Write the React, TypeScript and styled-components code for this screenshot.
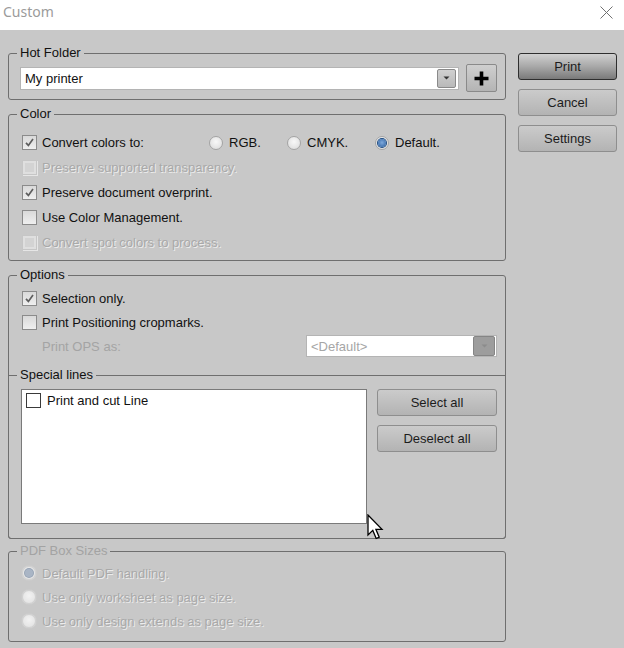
import React from "react";
import styled, { createGlobalStyle, css } from "styled-components";

const GlobalStyle = createGlobalStyle`
  html, body {
    margin: 0;
    padding: 0;
    background: #c8c8c8;
  }
  body {
    font-family: "Liberation Sans", Arial, sans-serif;
    font-size: 13px;
    color: #111;
  }
  * {
    box-sizing: border-box;
  }
`;

const Window = styled.div`
  position: relative;
  width: 624px;
  height: 648px;
  overflow: hidden;
  background: #c8c8c8;
`;

const TitleBar = styled.div`
  height: 30px;
  background: #fff;
  display: flex;
  justify-content: space-between;
  align-items: flex-start;
  padding: 2px 11px 0 3px;
`;

const Title = styled.div`
  font-family: "Noto Sans", sans-serif;
  font-size: 14px;
  line-height: 20px;
  color: #9b9b9b;
`;

const CloseBox = styled.div`
  padding-top: 4px;
  display: flex;
`;

const Body = styled.div`
  display: flex;
  gap: 12px;
  padding: 16px 0 0 8px;
`;

const LeftColumn = styled.div`
  width: 498px;
  display: flex;
  flex-direction: column;
`;

const RightColumn = styled.div`
  width: 99px;
  display: flex;
  flex-direction: column;
  gap: 9px;
  padding-top: 7px;
`;

const Group = styled.fieldset<{ $top?: number }>`
  margin: ${(p) => p.$top ?? 0}px 0 0;
  padding: 0;
  min-width: 0;
  border: 1px solid #6f6f6f;
  border-radius: 3px;
`;

// shares left/right/bottom edges with the Options box
const InnerGroup = styled.fieldset`
  margin: 10px -1px -1px;
  padding: 0;
  min-width: 0;
  border: 1px solid #6f6f6f;
  border-radius: 0 0 3px 3px;
`;

const Legend = styled.legend<{ $disabled?: boolean }>`
  margin-left: 8px;
  padding: 0 3px;
  line-height: 14px;
  font-size: 13px;
  color: ${(p) => (p.$disabled ? "#a3a3a3" : "#111")};
`;

const GroupBody = styled.div<{ $pad: string }>`
  padding: ${(p) => p.$pad};
`;

const Row = styled.div<{ $h?: number }>`
  display: flex;
  align-items: center;
  height: ${(p) => p.$h ?? 25}px;
`;

const HotRow = styled.div`
  display: flex;
  align-items: center;
  gap: 7px;
  height: 28px;
`;

const Combo = styled.div<{ $disabled?: boolean }>`
  flex: 1;
  height: 23px;
  background: #fff;
  border: 1px solid #b4b4b4;
  display: flex;
  align-items: center;
  padding: 0 2px 0 4px;
  color: ${(p) => (p.$disabled ? "#a6a6a6" : "#111")};
`;

const ComboText = styled.span`
  flex: 1;
`;

const DropButton = styled.span<{ $disabled?: boolean }>`
  width: 19px;
  height: 19px;
  border: 1px solid #8a8a8a;
  border-radius: 2px;
  background: linear-gradient(#d0d0d0, #b9b9b9);
  display: flex;
  align-items: center;
  justify-content: center;
  color: #333;
  ${(p) =>
    p.$disabled &&
    css`
      width: 22px;
      height: 20px;
      border-color: #858585;
      background: #9d9d9d;
      color: #8c8c8c;
    `}
`;

const PlusButton = styled.button`
  width: 31px;
  height: 28px;
  padding: 0;
  border: 1px solid #8a8a8a;
  border-radius: 2px;
  background: linear-gradient(#cfcfcf, #b4b4b4);
  display: flex;
  align-items: center;
  justify-content: center;
`;

const Box = styled.span<{ $disabled?: boolean }>`
  width: 15px;
  height: 15px;
  flex: none;
  border: 1px solid #8b8b8b;
  background: linear-gradient(#d9d9d9, #efefef);
  display: flex;
  align-items: center;
  justify-content: center;
  ${(p) =>
    p.$disabled &&
    css`
      border-color: #c6c6c6;
      background: #d3d3d3;
      box-shadow: inset 0 0 0 2px #dfdfdf, 1px 1px 0 #e6e6e6;
    `}
`;

const Label = styled.span<{ $disabled?: boolean }>`
  margin-left: 5px;
  white-space: nowrap;
  ${(p) =>
    p.$disabled &&
    css`
      color: #a9a9a9;
      text-shadow: 1px 1px 0 #ececec;
    `}
`;

const ConvertPart = styled.div`
  width: 187px;
  display: flex;
  align-items: center;
`;

const RadioItem = styled.div<{ $w?: number }>`
  display: flex;
  align-items: center;
  width: ${(p) => (p.$w ? `${p.$w}px` : "auto")};
`;

const RadioDot = styled.span<{ $checked?: boolean; $disabled?: boolean }>`
  width: 14px;
  height: 14px;
  flex: none;
  border-radius: 50%;
  border: 1px solid #a4a4a4;
  background: radial-gradient(circle at 50% 40%, #f8f8f8, #d9d9d9);
  display: flex;
  align-items: center;
  justify-content: center;
  ${(p) =>
    p.$disabled &&
    css`
      border-color: #d2d2d2;
      background: radial-gradient(circle at 50% 40%, #f2f2f2, #e0e0e0);
      box-shadow: 0 0 1px #efefef;
    `}
  ${(p) =>
    p.$checked &&
    css`
      &::after {
        content: "";
        width: 8px;
        height: 8px;
        border-radius: 50%;
        background: radial-gradient(circle at 50% 45%, #7ea9dc, #2a5e9f);
        box-shadow: 0 0 0 1px #1d4a80;
      }
    `}
  ${(p) =>
    p.$checked &&
    p.$disabled &&
    css`
      &::after {
        background: #a9b5c5;
        box-shadow: 0 0 0 1px #97a4b5;
      }
    `}
`;

const RadioLabel = styled.span<{ $disabled?: boolean }>`
  margin-left: 6px;
  white-space: nowrap;
  ${(p) =>
    p.$disabled &&
    css`
      color: #a9a9a9;
      text-shadow: 1px 1px 0 #ececec;
    `}
`;

const OpsLabel = styled.span`
  padding-left: 20px;
  color: #a4a4a4;
  flex: 1;
`;

const OpsSelect = styled(Combo)`
  flex: none;
  width: 191px;
  height: 22px;
  padding-right: 1px;
`;

const SpecialRow = styled.div`
  display: flex;
  align-items: flex-start;
  gap: 10px;
`;

const LineList = styled.div`
  flex: 1;
  height: 135px;
  background: #fff;
  border: 1px solid #7a7a7a;
  padding: 2px 4px;
`;

const ListItem = styled.div`
  display: flex;
  align-items: center;
  gap: 6px;
  height: 16px;
`;

const ItemBox = styled.span`
  width: 15px;
  height: 15px;
  border: 1px solid #3a3a3a;
  background: #fff;
`;

const ActionColumn = styled.div`
  width: 120px;
  display: flex;
  flex-direction: column;
  gap: 9px;
`;

const Button = styled.button<{ $primary?: boolean }>`
  width: 100%;
  height: 27px;
  padding: 0;
  font-family: "Liberation Sans", Arial, sans-serif;
  font-size: 13px;
  color: #1c1c1c;
  border: 1px solid #8e8e8e;
  border-radius: 3px;
  background: linear-gradient(#cbcbcb, #b3b3b3);
  ${(p) =>
    p.$primary &&
    css`
      border-color: #2e2e2e;
      background: linear-gradient(#d0d0d0 0%, #a8a8a8 50%, #7a7a7a 100%);
    `}
`;

const Cursor = styled.svg`
  position: absolute;
  left: 367px;
  top: 514px;
`;

const Check = () => (
  <svg width="11" height="11" viewBox="0 0 11 11">
    <path d="M2 5.8 L4.4 8.4 L9 2" fill="none" stroke="#5e5e5e" strokeWidth="1.7" />
  </svg>
);

const Arrow = () => (
  <svg width="7" height="4" viewBox="0 0 7 4">
    <path d="M0.5 0.5 H6.5 L3.5 3.5 Z" fill="currentColor" />
  </svg>
);

function CheckRow({
  label,
  checked,
  disabled,
  h,
}: {
  label: string;
  checked?: boolean;
  disabled?: boolean;
  h?: number;
}) {
  return (
    <Row $h={h}>
      <Box $disabled={disabled}>{checked && <Check />}</Box>
      <Label $disabled={disabled}>{label}</Label>
    </Row>
  );
}

function RadioRow({ label, checked }: { label: string; checked?: boolean }) {
  return (
    <Row $h={24}>
      <RadioDot $disabled $checked={checked} />
      <RadioLabel $disabled>{label}</RadioLabel>
    </Row>
  );
}

export default function App() {
  return (
    <Window>
      <GlobalStyle />
      <TitleBar>
        <Title>Custom</Title>
        <CloseBox>
          <svg width="13" height="13" viewBox="0 0 13 13">
            <path d="M0.5 0.5 L12.5 12.5 M12.5 0.5 L0.5 12.5" stroke="#707070" strokeWidth="1" />
          </svg>
        </CloseBox>
      </TitleBar>
      <Body>
        <LeftColumn>
          <Group>
            <Legend>Hot Folder</Legend>
            <GroupBody $pad="4px 8px 7px 11px">
              <HotRow>
                <Combo>
                  <ComboText>My printer</ComboText>
                  <DropButton>
                    <Arrow />
                  </DropButton>
                </Combo>
                <PlusButton>
                  <svg width="15" height="15" viewBox="0 0 15 15">
                    <path d="M7.5 0.5 V14.5 M0.5 7.5 H14.5" stroke="#000" strokeWidth="3.6" />
                  </svg>
                </PlusButton>
              </HotRow>
            </GroupBody>
          </Group>

          <Group $top={7}>
            <Legend>Color</Legend>
            <GroupBody $pad="9px 8px 5px 13px">
              <Row>
                <ConvertPart>
                  <Box>
                    <Check />
                  </Box>
                  <Label>Convert colors to:</Label>
                </ConvertPart>
                <RadioItem $w={78}>
                  <RadioDot />
                  <RadioLabel>RGB.</RadioLabel>
                </RadioItem>
                <RadioItem $w={88}>
                  <RadioDot />
                  <RadioLabel>CMYK.</RadioLabel>
                </RadioItem>
                <RadioItem>
                  <RadioDot $checked />
                  <RadioLabel>Default.</RadioLabel>
                </RadioItem>
              </Row>
              <CheckRow label="Preserve supported transparency." disabled />
              <CheckRow label="Preserve document overprint." checked />
              <CheckRow label="Use Color Management." />
              <CheckRow label="Convert spot colors to process." disabled />
            </GroupBody>
          </Group>

          <Group $top={7}>
            <Legend>Options</Legend>
            <GroupBody $pad="4px 8px 0 13px">
              <CheckRow label="Selection only." checked h={24} />
              <CheckRow label="Print Positioning cropmarks." h={24} />
              <Row $h={24}>
                <OpsLabel>Print OPS as:</OpsLabel>
                <OpsSelect $disabled>
                  <ComboText>&lt;Default&gt;</ComboText>
                  <DropButton $disabled>
                    <Arrow />
                  </DropButton>
                </OpsSelect>
              </Row>
            </GroupBody>
            <InnerGroup>
              <Legend>Special lines</Legend>
              <GroupBody $pad="7px 8px 14px 12px">
                <SpecialRow>
                  <LineList>
                    <ListItem>
                      <ItemBox />
                      <span>Print and cut Line</span>
                    </ListItem>
                  </LineList>
                  <ActionColumn>
                    <Button>Select all</Button>
                    <Button>Deselect all</Button>
                  </ActionColumn>
                </SpecialRow>
              </GroupBody>
            </InnerGroup>
          </Group>

          <Group $top={5}>
            <Legend $disabled>PDF Box Sizes</Legend>
            <GroupBody $pad="3px 8px 8px 13px">
              <RadioRow label="Default PDF handling." checked />
              <RadioRow label="Use only worksheet as page size." />
              <RadioRow label="Use only design extends as page size." />
            </GroupBody>
          </Group>
        </LeftColumn>

        <RightColumn>
          <Button $primary>Print</Button>
          <Button>Cancel</Button>
          <Button>Settings</Button>
        </RightColumn>
      </Body>

      <Cursor width="17" height="26" viewBox="0 0 17 26">
        <path
          d="M1 1 L1 21 L5.8 16.4 L9.2 24.5 L12.2 23.2 L8.9 15.3 L15 15.3 Z"
          fill="#fff"
          stroke="#000"
          strokeWidth="1.3"
          strokeLinejoin="miter"
        />
      </Cursor>
    </Window>
  );
}
